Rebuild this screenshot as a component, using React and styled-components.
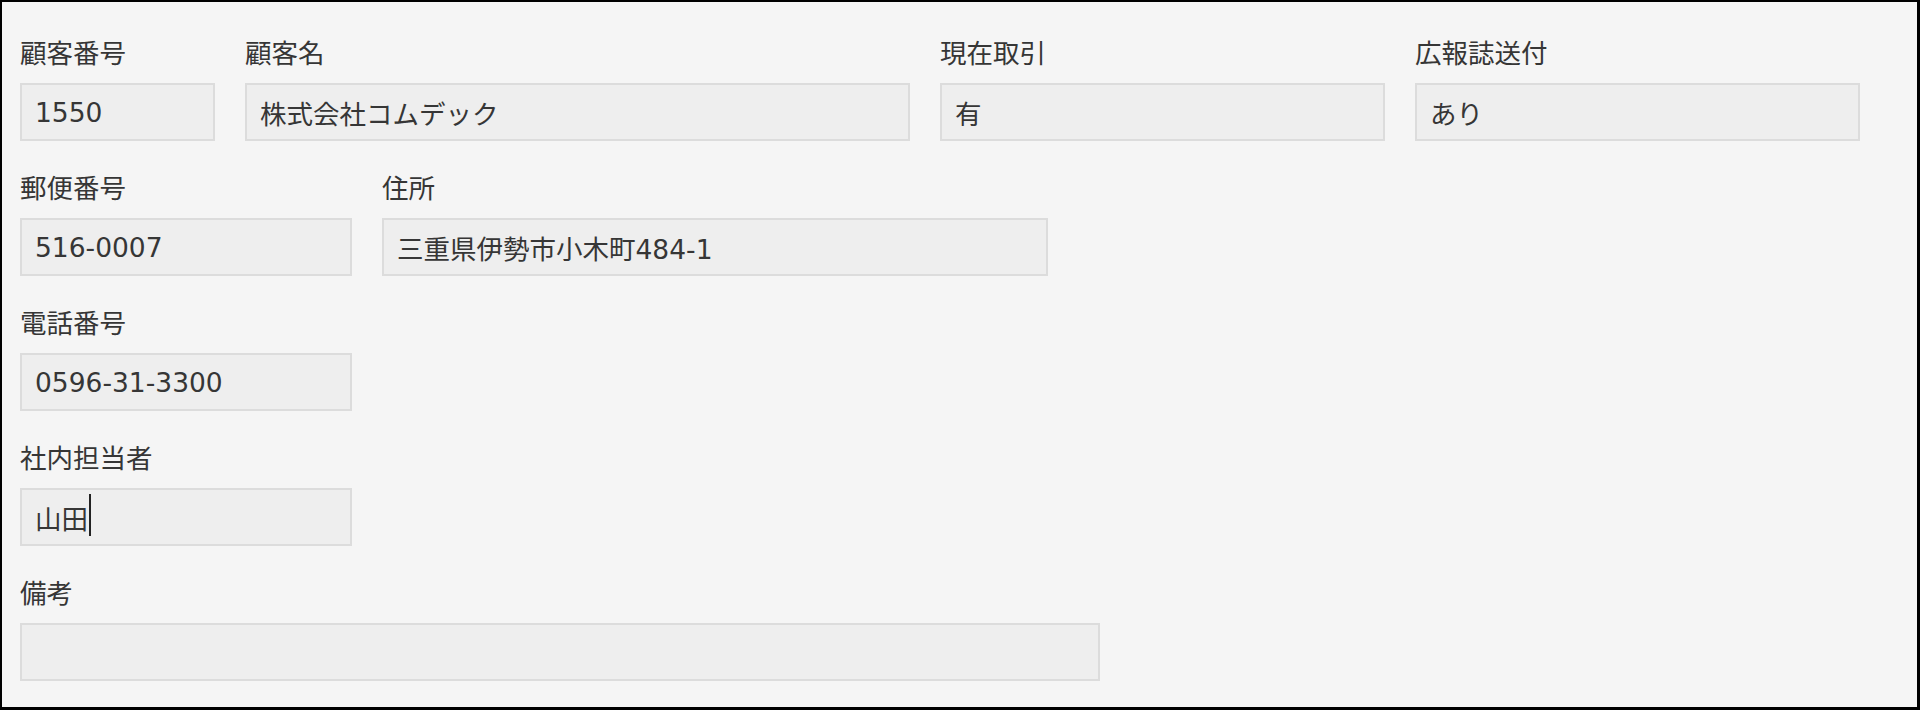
import React from "react";
import styled, { createGlobalStyle } from "styled-components";

const GlobalStyle = createGlobalStyle`
  html, body {
    margin: 0;
    padding: 0;
    background: #000;
  }
  * { box-sizing: border-box; }
`;

const Frame = styled.div`
  width: 1920px;
  height: 710px;
  overflow: hidden;
  background: #f5f5f5;
  border-style: solid;
  border-color: #000;
  border-width: 2px 3px 3px 2px;
  padding: 32px 0 0 18px;
  font-family: "DejaVu Sans", "Noto Sans CJK JP", sans-serif;
  color: #363636;
`;

const Form = styled.div`
  display: flex;
  flex-direction: column;
`;

const Row = styled.div`
  display: flex;
  gap: 30px;
  margin-bottom: 28px;
`;

const Field = styled.div`
  display: flex;
  flex-direction: column;
  width: ${(p) => p.$w}px;
`;

const Label = styled.div`
  height: 40px;
  line-height: 40px;
  font-size: 26.5px;
  margin-bottom: 9px;
  white-space: nowrap;
`;

const Box = styled.div`
  height: 58px;
  background: #eeeeee;
  border: 2px solid #dcdcdc;
  padding-left: 13px;
  display: flex;
  align-items: center;
  font-size: 26.5px;
  white-space: nowrap;
`;

const Caret = styled.span`
  display: inline-block;
  width: 2px;
  height: 42px;
  margin-left: 1px;
  margin-top: -4px;
  background: #222;
`;

const rows = [
  [
    { label: "顧客番号", value: "1550", w: 195 },
    { label: "顧客名", value: "株式会社コムデック", w: 665 },
    { label: "現在取引", value: "有", w: 445 },
    { label: "広報誌送付", value: "あり", w: 445 },
  ],
  [
    { label: "郵便番号", value: "516-0007", w: 332 },
    { label: "住所", value: "三重県伊勢市小木町484-1", w: 666 },
  ],
  [{ label: "電話番号", value: "0596-31-3300", w: 332 }],
  [{ label: "社内担当者", value: "山田", w: 332, caret: true }],
  [{ label: "備考", value: "", w: 1080 }],
];

export default function App() {
  return (
    <>
      <GlobalStyle />
      <Frame>
        <Form>
          {rows.map((row, i) => (
            <Row key={i}>
              {row.map((f) => (
                <Field key={f.label} $w={f.w}>
                  <Label>{f.label}</Label>
                  <Box>
                    {f.value}
                    {f.caret && <Caret />}
                  </Box>
                </Field>
              ))}
            </Row>
          ))}
        </Form>
      </Frame>
    </>
  );
}
